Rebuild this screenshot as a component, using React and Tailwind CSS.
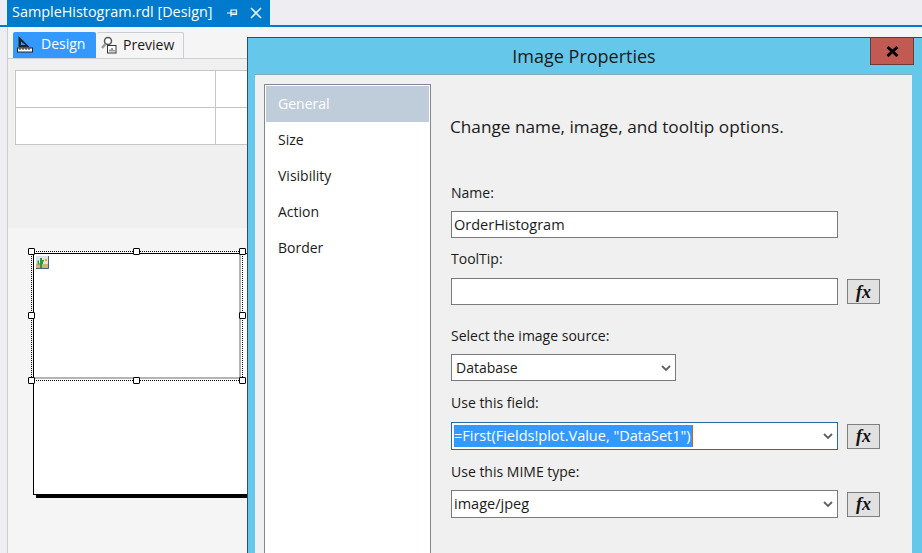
import React from "react";

const font = "font-['Open_Sans','Noto_Sans',sans-serif]";

const FxButton = ({ className = "" }) => (
  <button className={`w-[33px] h-[25px] bg-[#e1e1e1] border border-[#7f7f7f] flex items-center justify-center font-['Liberation_Serif',serif] italic font-bold text-[18px] leading-none text-[#111] ${className}`}>
    fx
  </button>
);

const Chevron = () => (
  <svg width="12" height="8" viewBox="0 0 12 8" className="shrink-0">
    <path d="M2 2 L6 6 L10 2" fill="none" stroke="#606060" strokeWidth="1.8" />
  </svg>
);

const Label = ({ children, className = "" }) => (
  <div className={`text-[14px] leading-[19px] text-[#1a1a1a] ${className}`}>{children}</div>
);

const Handle = ({ className }) => (
  <div className={`absolute w-[7px] h-[7px] bg-white border border-black rounded-[1px] ${className}`} />
);

const DesignIcon = () => (
  <svg width="16" height="18" viewBox="0 0 16 18">
    <path d="M1.5 1 L1.5 12 L12.5 12 Z M4 6.5 L4 10 L8.5 10 Z" fill="#222" fillRule="evenodd" />
    <rect x="0.5" y="13" width="15" height="4" fill="#fff" stroke="#222" />
    <path d="M3 13v2M6 13v2M9 13v2M12 13v2" stroke="#222" />
  </svg>
);

const PreviewIcon = () => (
  <svg width="16" height="18" viewBox="0 0 16 18">
    <circle cx="7" cy="5" r="3.5" fill="#fff" stroke="#555" strokeWidth="1.5" />
    <path d="M4.5 8 L1 12" stroke="#999" strokeWidth="2.5" />
    <rect x="6.5" y="9.5" width="8.5" height="7.5" fill="#fff" stroke="#333" />
    <path d="M9 15.5v-2M11 15.5v-3.5M13 15.5v-1.5" stroke="#333" />
  </svg>
);

const CactusIcon = () => (
  <svg width="13" height="13" viewBox="0 0 13 13" className="absolute left-[2px] top-[2px]">
    <rect x="0" y="0" width="13" height="13" fill="#d8e4ee" />
    <rect x="0" y="8" width="13" height="4" fill="#d4b36c" />
    <path d="M4 2h2v10H4z M1.5 4.5h1.5v3H4v1H1.5z M6 4h2v1.5H7V8H6z" fill="#2f9a3c" />
    <circle cx="10" cy="4" r="1.8" fill="#f0b020" stroke="#fff" strokeWidth="0.5" />
    <path d="M12.5 0v12.5H0" fill="none" stroke="#4a6078" />
  </svg>
);

const menu = ["General", "Size", "Visibility", "Action", "Border"];

export default function App() {
  return (
    <div className={`relative w-[922px] h-[553px] overflow-hidden bg-[#eeeef2] ${font}`}>
      {/* document tab */}
      <div className="h-[25px] pl-[7px] flex">
        <div className="w-[263px] bg-[#007acc] text-white flex items-center pl-[5px] text-[14.4px] leading-none">
          <span>SampleHistogram.rdl [Design]</span>
          <svg width="12" height="12" viewBox="0 0 12 12" className="ml-[13px]">
            <path d="M1 6h4M5 2.5v7M5 3h5.5v4.5H5M5 6h5.5" fill="none" stroke="#fff" strokeWidth="1.2" />
          </svg>
          <svg width="12" height="12" viewBox="0 0 12 12" className="ml-[12px]">
            <path d="M1 1 L11 11 M11 1 L1 11" stroke="#dff0fb" strokeWidth="1.6" />
          </svg>
        </div>
      </div>
      <div className="h-[2px] bg-[#007acc]" />

      <div className="ml-[7px] h-[526px] border-l border-[#ccced6] bg-[#f5f5f5] flex flex-col">
        {/* design / preview tabs */}
        <div className="h-[32px] pl-[5px] flex items-end gap-px border-b border-[#ccced6] pt-[4px]">
          <div className="w-[83px] h-[26px] bg-[#3399ff] text-white flex items-center pl-[4px] gap-[8px] text-[14px] pb-[3px] rounded-t-[2px]">
            <DesignIcon />
            <span>Design</span>
          </div>
          <div className="w-[87px] h-[27px] flex items-center pl-[4px] gap-[6px] text-[14px] text-[#1a1a1a] pb-[3px] border-t border-r border-[#ccced6] rounded-t-[2px] -mb-px">
            <PreviewIcon />
            <span>Preview</span>
          </div>
        </div>

        {/* page header band */}
        <div className="h-[169px] bg-[#f0f0f0] pt-[11px] pl-[7px]">
          <div className="w-[300px] h-[75px] grid grid-cols-[200px_1fr] grid-rows-[37px_37px] bg-white border border-[#c6c6c6]">
            <div className="border-r border-b border-[#c6c6c6]" />
            <div className="border-b border-[#c6c6c6]" />
            <div className="border-r border-[#c6c6c6]" />
            <div />
          </div>
        </div>

        {/* report body */}
        <div className="pt-[25px] pl-[25px]">
          <div className="relative w-[240px] h-[242px] bg-white border border-black shadow-[3px_3px_0_#000]">
            <div className="absolute left-0 top-0 w-[207px] h-[125px] border-r-2 border-b-2 border-[#b5b5b5]" />
            <CactusIcon />
            <div className="absolute -left-[3px] -top-[3px] w-[212px] h-[130px] border border-dotted border-black">
              <Handle className="-left-[4px] -top-[4px]" />
              <Handle className="left-[101px] -top-[4px]" />
              <Handle className="-right-[4px] -top-[4px]" />
              <Handle className="-left-[4px] top-[60px]" />
              <Handle className="-right-[4px] top-[60px]" />
              <Handle className="-left-[4px] -bottom-[4px]" />
              <Handle className="left-[101px] -bottom-[4px]" />
              <Handle className="-right-[4px] -bottom-[4px]" />
            </div>
          </div>
        </div>
      </div>

      {/* Image Properties dialog */}
      <div className="absolute left-[247px] top-[37px] w-[680px] h-[520px] bg-[#65c8ea] border-l border-t border-[#3a4a52] pl-[7px]">
        <div className="h-[36px] w-[658px] flex items-center justify-center text-[18px] text-[#1a1a1a] pt-[1px]">
          Image Properties
        </div>
        <button className="absolute left-[622px] top-0 w-[44px] h-[27px] bg-[#c15a52] border border-[#6b3a36] border-t-0 flex items-center justify-center">
          <svg width="13" height="11" viewBox="0 0 13 11">
            <path d="M1.5 1 L11.5 10 M11.5 1 L1.5 10" stroke="#000" strokeWidth="3" />
          </svg>
        </button>

        <div className="w-[657px] h-[480px] bg-[#f0f0f0] border-t border-[#7fa9bd] flex pt-[9px] pl-[9px]">
          <div className="w-[167px] h-[480px] bg-white border border-[#828790] p-px">
            {menu.map((item, i) => (
              <div
                key={item}
                className={`h-[36px] pl-[12px] pb-[2px] flex items-center text-[14px] ${
                  i === 0 ? "bg-[#bfcddb] text-white" : "text-[#1a1a1a]"
                }`}
              >
                {item}
              </div>
            ))}
          </div>

          <div className="pl-[20px] w-[460px]">
            <div className="text-[17.2px] leading-[24px] text-[#1a1a1a] mt-[31px] -ml-px">Change name, image, and tooltip options.</div>

            <Label className="mt-[44px]">Name:</Label>
            <div className="mt-[9px] w-[387px] h-[27px] bg-white border border-[#7a7a7a] flex items-center pl-[2px] text-[14.5px] text-[#1a1a1a]">
              OrderHistogram
            </div>

            <Label className="mt-[11px]">ToolTip:</Label>
            <div className="mt-[10px] flex items-center gap-[9px]">
              <div className="w-[387px] h-[27px] bg-white border border-[#7a7a7a]" />
              <FxButton />
            </div>

            <Label className="mt-[21px]">Select the image source:</Label>
            <div className="mt-[9px] w-[225px] h-[27px] bg-white border border-[#7a7a7a] flex items-center justify-between pl-[4px] pr-[3px] text-[14px] text-[#1a1a1a]">
              <span>Database</span>
              <Chevron />
            </div>

            <Label className="mt-[12px]">Use this field:</Label>
            <div className="mt-[10px] flex items-center gap-[9px]">
              <div className="w-[387px] h-[28px] bg-white border border-[#2b6a9f] flex items-center justify-between pl-[2px] pr-[3px] text-[14.5px]">
                <span className="bg-[#3399ff] text-white leading-[22px] pr-px border-r border-[#c8641e]">=First(Fields!plot.Value, "DataSet1")</span>
                <Chevron />
              </div>
              <FxButton />
            </div>

            <Label className="mt-[12px]">Use this MIME type:</Label>
            <div className="mt-[9px] flex items-center gap-[9px]">
              <div className="w-[387px] h-[28px] bg-white border border-[#7a7a7a] flex items-center justify-between pl-[2px] pr-[3px] text-[14.5px] text-[#1a1a1a]">
                <span>image/jpeg</span>
                <Chevron />
              </div>
              <FxButton />
            </div>
          </div>
        </div>
      </div>
    </div>
  );
}
